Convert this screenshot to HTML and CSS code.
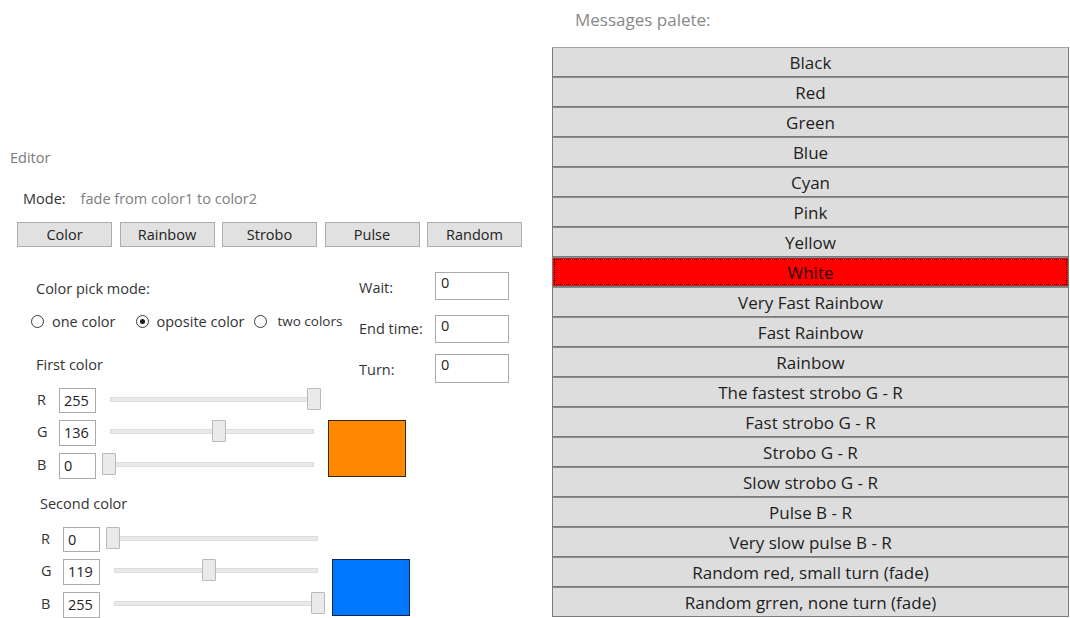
FILE: index.html
```html
<!DOCTYPE html>
<html lang="en">
<head>
<meta charset="utf-8">
<title>Editor</title>
<link rel="stylesheet" href="styles.css">
</head>
<body>
<div class="app">
  <section class="editor">
    <div class="editor-title">Editor</div>
    <div class="mode-row"><span class="mode-label">Mode:</span><span class="mode-value">fade from color1 to color2</span></div>
    <div class="mode-buttons">
      <button class="btn">Color</button>
      <button class="btn">Rainbow</button>
      <button class="btn">Strobo</button>
      <button class="btn">Pulse</button>
      <button class="btn">Random</button>
    </div>
    <div class="settings">
      <div class="colors">
        <div class="pick-title">Color pick mode:</div>
        <div class="radios">
          <span class="radio"></span><span class="radio-text r1">one color</span>
          <span class="radio checked"></span><span class="radio-text r2">oposite color</span>
          <span class="radio"></span><span class="radio-text small">two colors</span>
        </div>

        <div class="group-title first">First color</div>
        <div class="channels first">
          <div class="swatch orange"></div>
          <span class="ch-label">R</span><span class="field">255</span>
          <div class="slider"><span class="track"></span><span class="thumb" style="left: 205px"></span></div>
          <span class="ch-label">G</span><span class="field">136</span>
          <div class="slider"><span class="track"></span><span class="thumb" style="left: 110px"></span></div>
          <span class="ch-label">B</span><span class="field">0</span>
          <div class="slider"><span class="track"></span><span class="thumb" style="left: 0px"></span></div>
        </div>

        <div class="group-title second">Second color</div>
        <div class="channels second">
          <div class="swatch blue"></div>
          <span class="ch-label">R</span><span class="field">0</span>
          <div class="slider"><span class="track"></span><span class="thumb" style="left: 0px"></span></div>
          <span class="ch-label">G</span><span class="field">119</span>
          <div class="slider"><span class="track"></span><span class="thumb" style="left: 96px"></span></div>
          <span class="ch-label">B</span><span class="field">255</span>
          <div class="slider"><span class="track"></span><span class="thumb" style="left: 205px"></span></div>
        </div>
      </div>

      <div class="timing">
        <div class="t-row wait"><span class="t-label">Wait:</span><span class="t-field">0</span></div>
        <div class="t-row end"><span class="t-label">End time:</span><span class="t-field">0</span></div>
        <div class="t-row turn"><span class="t-label">Turn:</span><span class="t-field">0</span></div>
      </div>
    </div>
  </section>

  <section class="palette">
    <div class="palette-title">Messages palete:</div>
    <div class="messages">
      <div class="msg">Black</div>
      <div class="msg">Red</div>
      <div class="msg">Green</div>
      <div class="msg">Blue</div>
      <div class="msg">Cyan</div>
      <div class="msg">Pink</div>
      <div class="msg">Yellow</div>
      <div class="msg selected">White</div>
      <div class="msg">Very Fast Rainbow</div>
      <div class="msg">Fast Rainbow</div>
      <div class="msg">Rainbow</div>
      <div class="msg">The fastest strobo G - R</div>
      <div class="msg">Fast strobo G - R</div>
      <div class="msg">Strobo G - R</div>
      <div class="msg">Slow strobo G - R</div>
      <div class="msg">Pulse B - R</div>
      <div class="msg">Very slow pulse B - R</div>
      <div class="msg">Random red, small turn (fade)</div>
      <div class="msg">Random grren, none turn (fade)</div>
    </div>
  </section>
</div>
</body>
</html>
```

FILE: styles.css
```css
html, body {
  margin: 0;
  padding: 0;
  background: #ffffff;
}

body {
  font-family: "Open Sans", "Noto Sans", sans-serif;
  color: #222;
  width: 1070px;
  height: 618px;
  overflow: hidden;
}

.app {
  display: flex;
  align-items: flex-start;
}

/* ---------- editor (left) ---------- */
.editor {
  width: 552px;
  flex: none;
  padding-top: 149px;
  font-size: 14.5px;
}

.editor-title {
  margin-left: 10px;
  line-height: 18px;
  color: #7a7a7a;
}

.mode-row {
  margin: 23px 0 0 23px;
  line-height: 18px;
}

.mode-label {
  color: #333;
  margin-right: 15px;
}

.mode-value {
  color: #808080;
}

.mode-buttons {
  display: flex;
  gap: 7.5px;
  margin: 14px 0 0 17px;
}

.btn {
  width: 95px;
  height: 25px;
  padding: 0;
  font: inherit;
  font-size: 14.5px;
  line-height: 22px;
  color: #222;
  background: #e1e1e1;
  border: 1px solid #adadad;
  border-radius: 0;
}

.settings {
  display: flex;
}

.colors {
  width: 359px;
  flex: none;
}

.pick-title {
  margin: 33px 0 0 36px;
  line-height: 18px;
  color: #333;
}

.radios {
  display: flex;
  align-items: center;
  margin: 14px 0 0 31px;
  height: 18px;
  color: #333;
}

.radio {
  width: 13px;
  height: 13px;
  box-sizing: border-box;
  border: 1px solid #3a3a3a;
  border-radius: 50%;
  background: #fff;
  position: relative;
  flex: none;
}

.radio.checked::after {
  content: "";
  position: absolute;
  left: 3px;
  top: 3px;
  width: 5px;
  height: 5px;
  border-radius: 50%;
  background: #1a1a1a;
}

.radio-text {
  margin-left: 8px;
}

.radio-text.r1 {
  margin-right: 20px;
}

.radio-text.r2 {
  margin-right: 10px;
}

.radio-text.small {
  font-size: 13.5px;
  margin-left: 10px;
}

.group-title {
  line-height: 18px;
  color: #333;
}

.group-title.first {
  margin: 26px 0 0 36px;
}

.group-title.second {
  margin: 16px 0 0 40px;
}

.channels {
  display: grid;
  grid-template-columns: 16px 37px 219px 79px;
  grid-template-rows: 25px 26px 26px;
  column-gap: 6px;
  row-gap: 7px;
  margin-top: 14px;
  align-items: start;
}

.channels.first {
  padding-left: 37px;
}

.channels.second {
  padding-left: 41px;
}

.ch-label {
  grid-column: 1;
  line-height: 23px;
  color: #333;
}

.field {
  box-sizing: border-box;
  height: 100%;
  border: 1px solid #ababab;
  padding: 3px 0 0 4px;
  line-height: 18px;
  color: #222;
  background: #fff;
}

.slider {
  position: relative;
  height: 22px;
}

.track {
  position: absolute;
  left: 8px;
  right: 7px;
  top: 9px;
  height: 5px;
  box-sizing: border-box;
  background: #e9e9e9;
  border: 1px solid #dcdcdc;
}

.thumb {
  position: absolute;
  top: 0;
  width: 14px;
  height: 22px;
  box-sizing: border-box;
  background: #eaeaea;
  border: 1px solid #b9b9b9;
  border-radius: 1px;
}

.swatch {
  grid-column: 4;
  grid-row: 2 / 4;
  box-sizing: border-box;
  margin-left: 1px;
  height: 57px;
  border: 1px solid #3b2a10;
}

.swatch.orange {
  background: #ff8800;
}

.swatch.blue {
  background: #0077ff;
  border-color: #10264a;
}

.timing {
  display: flex;
  flex-direction: column;
  margin-top: 25px;
}

.t-row {
  display: flex;
  align-items: center;
  height: 28px;
}

.t-row.end {
  margin-top: 15px;
}

.t-row.turn {
  margin-top: 11px;
  height: 29px;
}

.t-label {
  width: 76px;
  color: #333;
  line-height: 18px;
  padding-top: 3px;
}

.t-row.end .t-label {
  padding-top: 0;
}

.t-field {
  box-sizing: border-box;
  width: 74px;
  height: 100%;
  border: 1px solid #ababab;
  padding: 1px 0 0 5px;
  line-height: 18px;
  color: #222;
}

/* ---------- messages palette (right) ---------- */
.palette {
  width: 517px;
  flex: none;
  padding-top: 10px;
}

.palette-title {
  margin-left: 23px;
  line-height: 20px;
  font-size: 17px;
  color: #888;
}

.messages {
  margin-top: 17px;
  display: flex;
  flex-direction: column;
}

.msg {
  height: 30px;
  box-sizing: border-box;
  border: 1px solid #7c7c7c;
  border-top-color: #8a8a8a;
  background: #dddddd;
  text-align: center;
  font-size: 17px;
  padding-top: 1px;
  line-height: 27px;
  color: #1e1e1e;
}

.msg:first-child {
  border-top-color: #a3a3a3;
}

.msg.selected {
  background: #ff0000;
  color: #2a0000;
  outline: 1px dotted #000;
  outline-offset: -3px;
}
```
